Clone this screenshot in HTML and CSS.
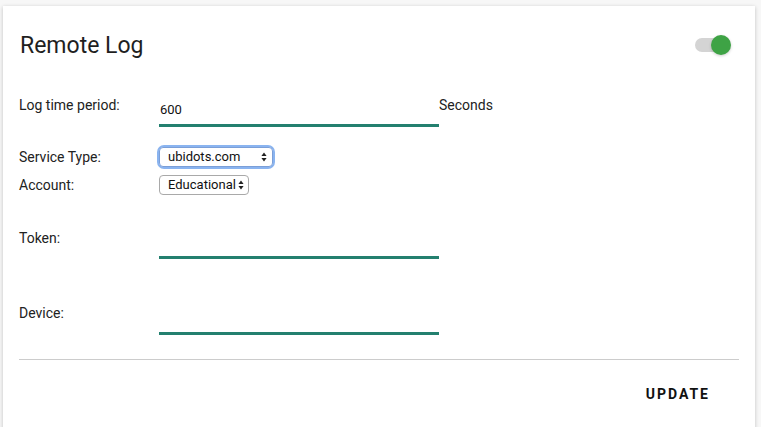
FILE: index.html
```html
<!DOCTYPE html>
<html>
<head>
<meta charset="utf-8">
<link rel="stylesheet" href="styles.css">
</head>
<body>
<div class="card">
  <div class="header">
    <h1 class="title">Remote Log</h1>
    <div class="switch">
      <div class="track"></div>
      <div class="thumb"></div>
    </div>
  </div>

  <div class="row row-log">
    <label class="label">Log time period:</label>
    <input class="field" type="text" value="600">
    <span class="unit">Seconds</span>
  </div>

  <div class="row row-select row-service">
    <label class="label">Service Type:</label>
    <div class="select-wrap focused service">
      <select class="select"><option>ubidots.com</option></select>
      <svg class="arrows" width="6" height="10" viewBox="0 0 6 10"><path d="M3 0.5 L5.6 4 H0.4 Z M3 9.5 L5.6 6 H0.4 Z" fill="#222"/></svg>
    </div>
  </div>

  <div class="row row-select row-account">
    <label class="label">Account:</label>
    <div class="select-wrap account">
      <select class="select"><option>Educational</option></select>
      <svg class="arrows" width="6" height="10" viewBox="0 0 6 10"><path d="M3 0.5 L5.6 4 H0.4 Z M3 9.5 L5.6 6 H0.4 Z" fill="#222"/></svg>
    </div>
  </div>

  <div class="row row-token">
    <label class="label">Token:</label>
    <input class="field" type="text" value="">
  </div>

  <div class="row row-device">
    <label class="label">Device:</label>
    <input class="field" type="text" value="">
  </div>

  <div class="divider"></div>

  <div class="footer">
    <button class="btn">UPDATE</button>
  </div>
</div>
</body>
</html>
```

FILE: styles.css
```css
html, body {
  margin: 0;
  padding: 0;
}
body {
  background: #f7f7f7;
  font-family: Roboto, "Liberation Sans", Arial, sans-serif;
  color: #212121;
  width: 761px;
  height: 427px;
  overflow: hidden;
}
.card {
  margin: 6px 6px 0 3px;
  height: 440px;
  background: #fff;
  box-shadow: 0 1px 4px rgba(0,0,0,0.22);
  padding: 0 16px;
  box-sizing: border-box;
}
.header {
  height: 78px;
  display: flex;
  align-items: center;
  justify-content: space-between;
}
.title {
  margin: 0;
  font-size: 23px;
  font-weight: 400;
  line-height: 26px;
  color: #1f1f1f;
  padding-left: 1px;
  padding-top: 1px;
}
.switch {
  position: relative;
  width: 36px;
  height: 20px;
  margin-right: 8px;
}
.track {
  position: absolute;
  left: 0;
  top: 3px;
  width: 34px;
  height: 14px;
  border-radius: 7px;
  background: #d4d4d4;
}
.thumb {
  position: absolute;
  right: 0;
  top: 0;
  width: 20px;
  height: 20px;
  border-radius: 50%;
  background: #3ea345;
  box-shadow: 0 1px 3px rgba(0,0,0,0.2);
}
.row {
  display: flex;
  align-items: flex-start;
}
.label {
  width: 140px;
  flex: none;
  font-size: 14px;
  line-height: 16px;
  color: #222;
}
.field {
  width: 280px;
  height: 29px;
  box-sizing: border-box;
  border: none;
  border-bottom: 3px solid #23806f;
  padding: 3px 1px 7px;
  margin: 0;
  font-family: Roboto, "Liberation Sans", Arial, sans-serif;
  font-size: 13px;
  line-height: 16px;
  color: #111;
  outline: none;
  background: transparent;
}
.unit {
  font-size: 14px;
  line-height: 16px;
  color: #222;
  margin-top: -1px;
}
.row-log {
  padding-top: 14px;
}
.row-log .label {
  margin-top: -1px;
}
.row-select {
  align-items: center;
}
.row-service {
  margin-top: 20px;
}
.row-account {
  margin-top: 8px;
}
.select-wrap {
  position: relative;
  height: 20px;
}
.select {
  -webkit-appearance: none;
  appearance: none;
  height: 20px;
  box-sizing: border-box;
  border: 1px solid #a9a9a9;
  border-radius: 4px;
  background: #fff;
  font-family: Roboto, "Liberation Sans", Arial, sans-serif;
  font-size: 13px;
  line-height: 16px;
  color: #111;
  padding: 0 0 0 8px;
  margin: 0;
  display: block;
}
.service .select {
  width: 114px;
  border-color: #7b9fd8;
}
.focused {
  border-radius: 5px;
  box-shadow: 0 0 0 2px #8ab4f0;
}
.account .select {
  width: 90px;
}
.arrows {
  position: absolute;
  top: 5px;
  pointer-events: none;
}
.service .arrows {
  right: 6px;
}
.account .arrows {
  right: 5px;
}
.row-token {
  margin-top: 33px;
}
.row-token .label {
  margin-top: 2px;
}
.row-device .label {
  margin-top: 1px;
}
.row-token .field,
.row-device .field {
  margin-top: 2px;
}
.row-device {
  margin-top: 45px;
}
.divider {
  margin-top: 24px;
  height: 1px;
  background: #cccccc;
}
.footer {
  display: flex;
  justify-content: flex-end;
  padding: 26px 31px 0 0;
}
.btn {
  border: none;
  background: none;
  padding: 0;
  margin: 0;
  font-family: Roboto, "Liberation Sans", Arial, sans-serif;
  font-size: 14px;
  font-weight: 700;
  line-height: 16px;
  letter-spacing: 2px;
  color: #111;
  margin-right: -2px;
}
```
